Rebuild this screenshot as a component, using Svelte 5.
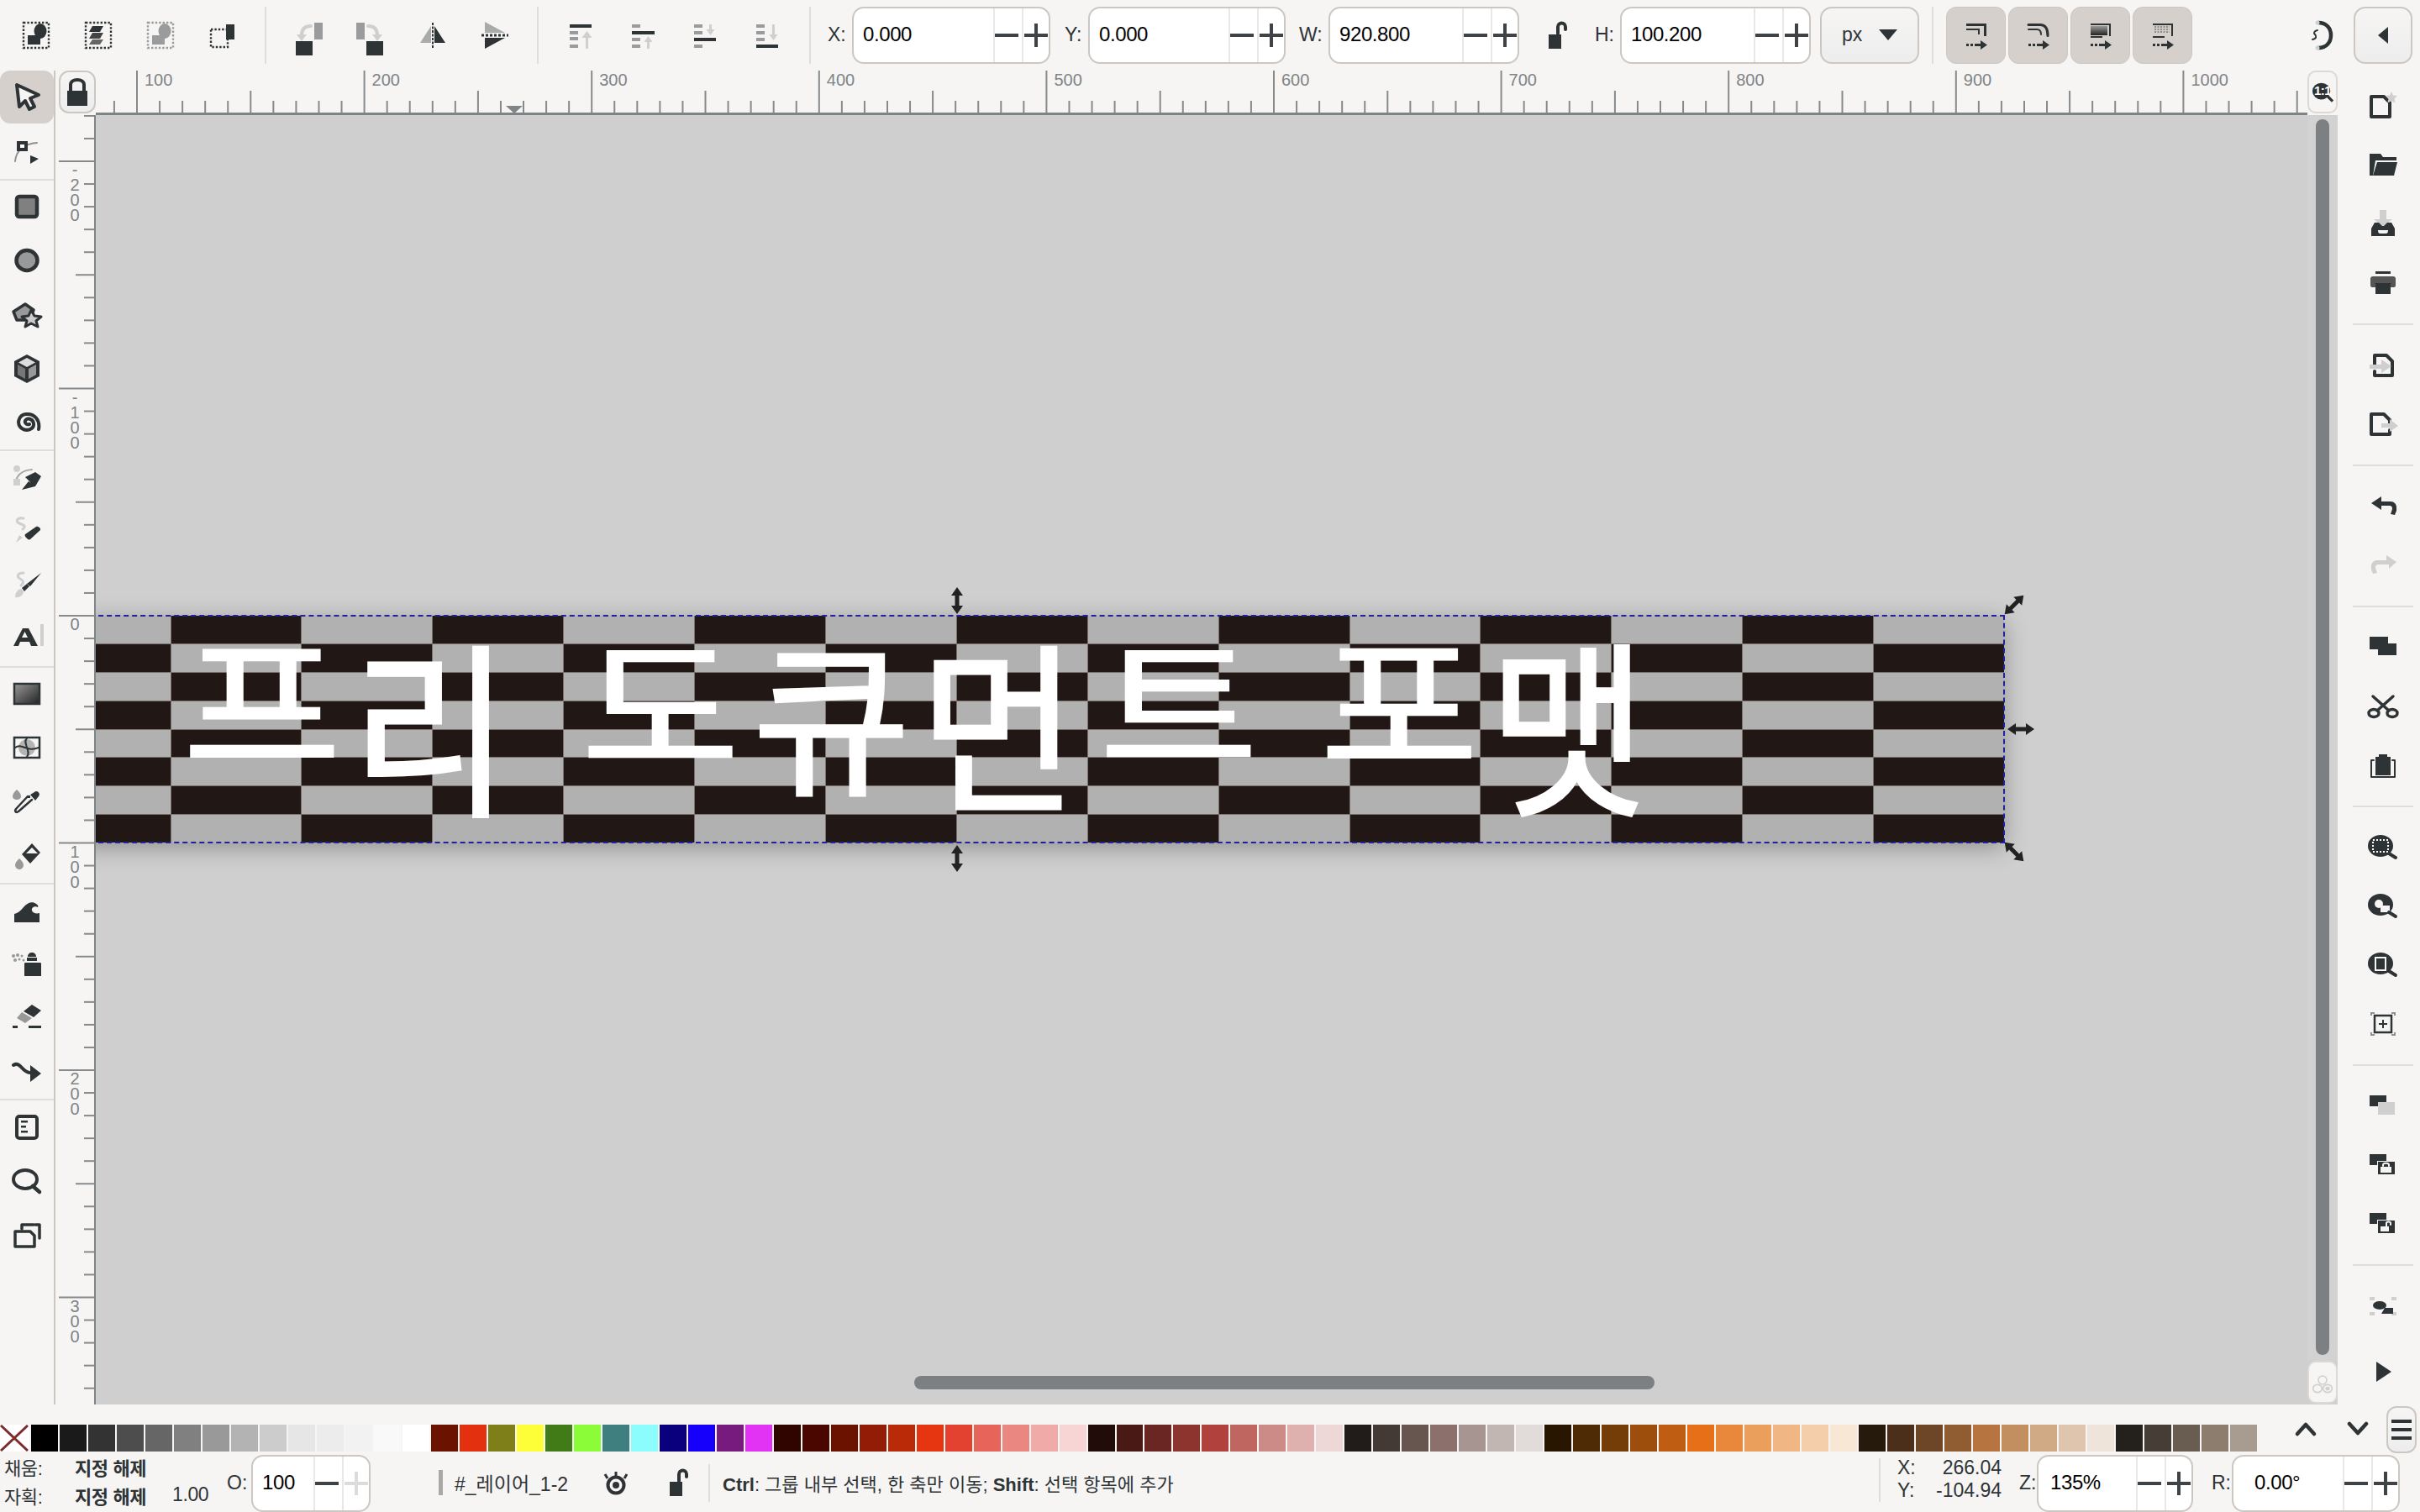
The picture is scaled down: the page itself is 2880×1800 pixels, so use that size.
<script>
  const D = "#2e3436";
  const M = "#999b9c";
  const L = "#cfcfcf";

  const dash = (x, y, w, h, c = D) =>
    `<rect x="${x}" y="${y}" width="${w}" height="${h}" fill="none" stroke="${c}" stroke-width="2.4" stroke-dasharray="2.4 2"/>`;
  const r = (x, y, w, h, c = D) => `<rect x="${x}" y="${y}" width="${w}" height="${h}" fill="${c}"/>`;
  const p = (d, c = D) => `<path d="${d}" fill="${c}"/>`;
  const s = (d, c = D, w = 4) => `<path d="${d}" fill="none" stroke="${c}" stroke-width="${w}" stroke-linecap="round" stroke-linejoin="round"/>`;

  const icons = {
    selAll: dash(9, 9, 30, 30) + `<ellipse cx="29" cy="19" rx="7.5" ry="9" fill="${D}"/>` + r(14, 24, 15, 11),
    selLayers: dash(9, 9, 30, 30) + p("M17 13h13l-4 7H13z") + p("M17 21h13l-4 7H13z", "#444") + p("M17 29h13l-4 6H13z", "#666"),
    invert: dash(9, 9, 30, 30, M) + `<ellipse cx="29" cy="19" rx="7.5" ry="9" fill="${M}"/>` + r(14, 24, 15, 11, M),
    deselect: dash(10, 17, 20, 21) + r(28, 11, 10, 18),
    rotCcw: r(9, 31, 20, 17) + r(31, 9, 10, 20, M) + s("M27 13c-8 0-11 4-11 11", L, 4) + p("M10 23h12l-6 8z", L),
    rotCw: r(19, 31, 20, 17) + r(7, 9, 10, 20, M) + s("M21 13c8 0 11 4 11 11", L, 4) + p("M26 23h12l-6 8z", L),
    flipH: p("M22 13v20H9z", "#a9abab") + p("M26 13v20h13z") + `<path d="M24 9v30" stroke="${D}" stroke-width="2" stroke-dasharray="3 1.5"/>`,
    flipV: p("M12 8v13h24z", "#a9abab") + p("M12 40V27h24z") + `<path d="M8 24h32" stroke="${D}" stroke-width="3" stroke-dasharray="3 2"/>`,
    alignTop: r(11, 11, 26, 4) + r(11, 19, 10, 4, M) + r(11, 26, 10, 4, M) + r(11, 35, 10, 4, M) + r(30, 24, 3, 16, L) + p("M31.5 19l6 8h-12z", L),
    alignCenter: r(11, 11, 10, 4, M) + r(11, 19, 27, 4) + r(11, 27, 10, 4, M) + r(11, 35, 10, 4, M) + r(29, 31, 3, 9, L) + p("M30.5 25l5 7h-10z", L),
    alignBottomIn: r(11, 11, 10, 4, M) + r(11, 19, 10, 4, M) + r(11, 27, 26, 4) + r(11, 35, 10, 4, M) + r(29, 11, 3, 8, L) + p("M30.5 24l5-7h-10z", L),
    alignBottom: r(11, 11, 10, 4, M) + r(11, 19, 10, 4, M) + r(11, 27, 10, 4, M) + r(11, 35, 26, 4) + r(30, 11, 3, 14, L) + p("M31.5 30l5-7h-10z", L),
    snap1: r(12, 10, 24, 3) + r(33, 10, 3, 15) + r(12, 16, 16, 2) + r(26, 16, 2, 7) + r(12, 34, 3, 3) + r(17, 34, 3, 3) + r(22, 34, 8, 3) + p("M29 30l8 5.5-8 5.5z"),
    snap2: s("M12 11.5h14c7 0 9 6 9 13", D, 3) + s("M12 17h10c3 0 5 2 5 6", D, 2) + r(12, 34, 3, 3) + r(17, 34, 3, 3) + r(22, 34, 8, 3) + p("M29 30l8 5.5-8 5.5z"),
    snap3: r(12, 10, 24, 2) + r(34, 10, 2, 15) + `<rect x="12" y="13" width="20" height="11" fill="url(#gr)"/>` + r(12, 25, 14, 2) + r(12, 34, 3, 3) + r(17, 34, 3, 3) + r(22, 34, 8, 3) + p("M29 30l8 5.5-8 5.5z"),
    snap4: r(12, 10, 24, 2) + r(34, 10, 2, 15) + `<path d="M14 14h18M14 17h18M14 20h18" stroke="#777" stroke-width="1.5" stroke-dasharray="2 1.5"/>` + r(12, 25, 14, 2) + r(12, 34, 3, 3) + r(17, 34, 3, 3) + r(22, 34, 8, 3) + p("M29 30l8 5.5-8 5.5z"),
    undoSnap: s("M21 9c10 0 15 7 15 15s-5 15-15 15", D, 4.5) + `<circle cx="20" cy="9" r="2.5" fill="${L}"/><circle cx="20" cy="39" r="2.5" fill="${L}"/>` + s("M20 18c-4 1-5 3-3 5s2 5-3 6", D, 2),
    arrowLeft: p("M30 14v20l-12-10z"),
    lockOpen: r(13, 23, 15, 17) + s("M24 22v-8c0-6 9-6 9 0v3", D, 4),
    lockClosed: r(12, 22, 24, 18) + s("M16 22v-7c0-8 16-8 16 0v7", D, 4),
    oneToOne: `<ellipse cx="22" cy="22" rx="15" ry="14" fill="#2e3436"/><path d="M32 30l9 9" stroke="${D}" stroke-width="4.5"/>`,
    colorMode: `<g fill="none" stroke="#cfcfcf" stroke-width="2.5"><circle cx="24" cy="15" r="7.5"/><ellipse cx="15" cy="30" rx="8" ry="7"/><ellipse cx="33" cy="30" rx="8" ry="7"/></g><ellipse cx="33" cy="30" rx="4" ry="3.5" fill="#cfcfcf"/>`,

    select: `<path d="M12 9L38 21L28 25L33 35L27 38L22 28L15 35Z" fill="#f6f5f4" stroke="${D}" stroke-width="4" stroke-linejoin="round"/>`,
    node: s("M10 35c1-12 10-21 26-22", "#8d8f90", 2) + r(12, 11, 13, 12) + r(16, 15, 5, 4, "#fff") + p("M28 28l10 4-10 6z"),
    rect: `<rect x="12" y="12" width="24" height="24" rx="3" fill="#808080" stroke="${D}" stroke-width="4.5"/>`,
    ellipse: `<ellipse cx="24" cy="24" rx="12.5" ry="12" fill="#999" stroke="${D}" stroke-width="4.5"/>`,
    star: `<path d="M8 20L22 11L32 18L28 30L12 30Z" fill="#999" stroke="${D}" stroke-width="3.5" stroke-linejoin="round"/><path d="M29 18l4 7 8 1-6 5 2 7-8-4-7 4 2-7-6-5 8-1z" fill="#ccc" stroke="${D}" stroke-width="3" stroke-linejoin="round"/>`,
    box: p("M24 7l15 8v18l-15 8-15-8V15z") + p("M24 11l10 5.5-10 5.5-10-5.5z", "#ddd") + p("M13 19l9 5v12l-9-5z", "#777") + p("M35 19l-9 5v12l9-5z", "#999"),
    spiral: s("M27 26c-3 1-6-1-5-4 2-4 9-3 10 3 1 7-8 10-14 6-7-5-4-16 5-17 10-1 17 7 15 18", D, 4),
    pen: s("M10 33c1-11 8-17 20-18", "#a9abab", 2) + `<circle cx="12" cy="14" r="4" fill="${L}"/>` + r(8, 26, 8, 8, L) + p("M22 24l12-6 7 5-7 12-16 4 8-10 3 2-3-3z"),
    pencil: s("M20 9c-8-1-10 4-5 6s9 3 4 7", L, 3) + p("M11 38l4-9 4 3z", L) + p("M22 28l13-9c2-1 6 2 5 4L28 34c-2 2-8-4-6-6z"),
    callig: s("M20 9c-8 0-8 5-4 7s5 5 1 8", L, 3) + p("M10 38c0-7 5-10 7-10l3 3c0 4-4 8-10 7z", L) + p("M18 27l6-5 3 3-6 6z") + p("M24 22L41 9 28 25z"),
    text: p("M8 32L19 11h7l11 21h-8l-2-5H16l-2 5zM18 22h7l-3.5-7z") + r(40, 6, 4, 26, L),
    gradient: `<rect x="9" y="12" width="30" height="24" fill="url(#gr2)" stroke="${D}" stroke-width="2.5"/>`,
    mesh: `<rect x="9" y="12" width="30" height="24" fill="#f6f5f4" stroke="${D}" stroke-width="2.5"/><circle cx="24" cy="24" r="10" fill="#999" opacity=".7"/>` + s("M10 24c8-6 14 6 28 0M24 13c-6 5 6 16 0 22", D, 2),
    dropper: `<path d="M12 10c3 3 5 5 5 8 0 3-3 4-5 4s-5-1-5-4c0-3 2-5 5-8z" fill="#999"/>` + s("M30 22L14 36c-3 2-5 0-3-3l14-15", D, 2.5) + p("M28 16l5-3c3-3 8 2 5 5l-4 5z") + r(25, 17, 3, 3),
    bucket: p("M30 9l10 11-12 13-10-11z") + p("M30 14l-7 7h14z", "#f6f5f4") + `<path d="M15 27c3 3 5 5 5 8s-3 5-5 5-5-2-5-5 2-5 5-8z" fill="#999"/>`,
    tweak: p("M9 38v-10c4-1 8-4 11-8 5-6 11-7 15-4 2 1 3 3 2 4-3-2-8 0-7 4 1 3 5 4 9 3v11z"),
    spray: p("M30 10c3 0 5 2 5 5h-10c0-3 2-5 5-5z") + r(24, 16, 12, 4) + p("M22 22h18c1 0 1 1 1 2v14H21V24c0-1 0-2 1-2z") + `<g fill="#999"><circle cx="8" cy="14" r="2"/><circle cx="13" cy="13" r="2"/><circle cx="18" cy="14" r="1.5"/><circle cx="10" cy="19" r="2"/><circle cx="15" cy="18" r="1.5"/><circle cx="20" cy="19" r="1.5"/></g>`,
    eraser: p("M30 8l11 7-9 8-12-7z") + p("M18 17l12 7-8 6-10-6z", "#999") + r(7, 33, 6, 3) + r(26, 33, 15, 3),
    connector: s("M8 16c8-5 10 8 19 9", D, 4) + p("M28 16l13 10-13 10z"),
    xml: `<rect x="12" y="12" width="24" height="26" rx="3" fill="none" stroke="${D}" stroke-width="4"/>` + r(17, 17, 8, 2.5) + r(17, 23, 6, 2.5) + r(17, 29, 8, 2.5),
    zoom: `<ellipse cx="22" cy="22" rx="14" ry="11" fill="none" stroke="${D}" stroke-width="4"/>` + s("M31 30l8 7", D, 4.5),
    pages: s("M10 20h18l5 5v13H10z", D, 3.5) + s("M18 17v-5h14", D, 3.5) + s("M34 12h5v16", D, 3.5),

    newDoc: s("M10 12h15l7 7v17H10z", D, 4) + p("M34 6l2 4.5 5 .5-3.5 3.5 1 5-4.5-2.5-4.5 2.5 1-5-3.5-3.5 5-.5z", L),
    open: p("M8 10h13l3 4h16v4H15l-3 18H8z") + p("M17 20h24l-4 16H12z"),
    save: r(20, 7, 8, 14, L) + p("M13 18h22l-11 9z", L) + p("M10 29l4-7h5l4 4h2l4-4h5l4 7v9H10zM18 31c0 3 1 4 3 4h6c2 0 3-1 3-4z"),
    print: r(15, 10, 18, 3) + `<path d="M9 19c0-2 1-3 3-3h24c2 0 3 1 3 3v8c0 1-1 2-2 2H11c-1 0-2-1-2-2z" fill="#555"/>` + r(15, 24, 18, 13),
    importDoc: s("M14 26v-14h14l7 7v17H14v-5", D, 4) + r(8, 23, 16, 5, L) + p("M22 17l12 8-12 8z", L),
    exportDoc: s("M10 12h15l7 7v5M32 31v5H10V12", D, 4) + r(22, 23, 16, 5, L) + p("M32 18l10 8-10 7z", L),
    undo: p("M10 20l12-8v6h11c4 0 7 3 7 7v4l-2 5-5-1 2-6c0-3-1-4-3-4H22v5z"),
    redo: p("M40 20l-12-8v6H17c-4 0-7 3-7 7v4l2 5 5-1-2-6c0-3 1-4 3-4h13v5z", L),
    dup: r(8, 11, 22, 15) + r(18, 19, 22, 14),
    cut: `<ellipse cx="13" cy="32" rx="6" ry="4.5" fill="none" stroke="${D}" stroke-width="3.5"/><ellipse cx="35" cy="32" rx="6" ry="4.5" fill="none" stroke="${D}" stroke-width="3.5"/>` + s("M17 29L36 12M31 29L12 12", D, 3.5),
    paste: s("M13 18H10v20h28V18h-3", D, 2) + r(15, 14, 18, 22) + r(19, 11, 10, 4),
    zoomSel: `<ellipse cx="21" cy="22" rx="15" ry="13" fill="${D}"/><rect x="12" y="15" width="18" height="14" fill="none" stroke="#fff" stroke-width="2" stroke-dasharray="2 2"/>` + s("M31 31l8 5", D, 4),
    zoomDraw: `<ellipse cx="21" cy="22" rx="15" ry="13" fill="${D}"/><circle cx="19" cy="21" r="5" fill="#f6f5f4"/>` + r(21, 23, 11, 8, "#f6f5f4") + s("M31 31l8 5", D, 4),
    zoomPage: `<ellipse cx="21" cy="22" rx="15" ry="13" fill="${D}"/>` + r(14, 14, 14, 17, "#f6f5f4") + r(16, 16, 10, 13) + s("M31 31l8 5", D, 4),
    zoomCenter: `<path d="M10 14v-3h4M34 11h4v3M38 34v3h-4M14 37h-4v-3" fill="none" stroke="#8d8f90" stroke-width="2"/><rect x="14" y="14" width="20" height="20" fill="none" stroke="${D}" stroke-width="2.5"/>` + r(19, 23, 10, 2) + r(23, 19, 2, 10),
    clone1: r(8, 11, 20, 13) + r(18, 19, 20, 15, L),
    cloneLock: r(8, 11, 20, 13) + r(17, 19, 22, 17, "#f6f5f4") + r(18, 20, 20, 15) + r(21, 26, 13, 7, "#f6f5f4") + s("M24 25v-1c0-3 7-3 7 0v1", "#f6f5f4", 2),
    cloneUnlock: r(8, 11, 20, 13) + r(17, 19, 22, 17, "#f6f5f4") + r(18, 20, 20, 15) + r(21, 27, 10, 6, "#f6f5f4") + s("M28 27v-4c0-2 5-2 5 0v2", "#f6f5f4", 2),
    group: r(8, 13, 6, 4, L) + r(34, 13, 6, 4, L) + r(8, 31, 6, 4, L) + r(34, 31, 6, 4, L) + `<ellipse cx="20" cy="23" rx="8" ry="5" fill="${D}"/>` + p("M26 26h10v7H22z"),
    expand: p("M16 12l18 12-18 12z"),
    up: s("M14 28l10-11 10 11", D, 4.5),
    down: s("M14 18l10 11 10-11", D, 4.5),
    eye: `<circle cx="24" cy="27" r="9.5" fill="none" stroke="${D}" stroke-width="4"/><circle cx="24" cy="27" r="4" fill="${D}"/><path d="M14 19l-3-5M34 19l3-5M24 16v-5" stroke="${D}" stroke-width="3"/>`,
  };

  const topA = ["selAll", "selLayers", "invert", "deselect"];
  const topB = ["rotCcw", "rotCw", "flipH", "flipV"];
  const topC = ["alignTop", "alignCenter", "alignBottomIn", "alignBottom"];
  const snapBtns = ["snap1", "snap2", "snap3", "snap4"];

  const tools = [
    ["select", "node"],
    ["rect", "ellipse", "star", "box", "spiral"],
    ["pen", "pencil", "callig", "text"],
    ["gradient", "mesh", "dropper", "bucket"],
    ["tweak", "spray", "eraser", "connector"],
    ["xml", "zoom", "pages"],
  ];
  const commands = [
    ["newDoc", "open", "save", "print"],
    ["importDoc", "exportDoc"],
    ["undo", "redo"],
    ["dup", "cut", "paste"],
    ["zoomSel", "zoomDraw", "zoomPage", "zoomCenter"],
    ["clone1", "cloneLock", "cloneUnlock"],
    ["group", "expand"],
  ];

  const swatches = (
    "000000 1a1a1a 333333 4d4d4d 666666 808080 999999 b3b3b3 cccccc e6e6e6 ececec f2f2f2 f9f9f9 ffffff " +
    "6c1200 e33110 7f7f19 fdfd38 417b17 8bfd38 407f80 8bfdfd 0a007d 1600fb 781b7e e233f5 " +
    "300500 4a0700 6c1200 921c05 ba2a09 e53511 e44230 e6645a ea8781 f0aaa8 f7d5d4 " +
    "210c09 491916 692622 8d342f b1413c bf6660 cc8b87 deb0ae edd8d7 " +
    "211c1a 433935 67554f 8b706c a69590 c2b6b2 e1dcda " +
    "281601 4e2a05 743d08 9e4e0c bf5d12 e66f17 e9883a eb9f5d f0b785 f4cdaa f9e7d6 " +
    "261a0d 4b2f1a 6c4626 905d33 b57440 c28f61 d0aa85 e0c5ae efe4da " +
    "24201c 453d36 695d52 8d7d6f a89c90"
  ).split(" ");

  // 눈금: 100 단위마다 긴 눈금과 숫자
  const hTicks = [];
  for (let v = 90; v <= 1050; v += 10) {
    hTicks.push({ v, x: 49 + 2.706 * (v - 100), top: v % 100 === 0 ? 0 : v % 50 === 0 ? 24 : 36 });
  }
  const vTicks = [];
  for (let v = -220; v <= 340; v += 10) {
    vTicks.push({ v, y: 596 + 2.705 * v, left: v % 100 === 0 ? 4 : v % 50 === 0 ? 24 : 34 });
  }
  const cells = Array.from({ length: 120 }, (_, i) => (i % 15) % 2 !== Math.floor(i / 15) % 2);

  // 글자별 세로 비율과 위치 (원본 글꼴의 자형이 글자마다 달라서)
  const title = [
    { ch: "프", sy: 0.88, dy: -20, dx: 0 },
    { ch: "리", sy: 1.08, dy: 9, dx: -4 },
    { ch: " ", sy: 1, dy: 0, dx: 0 },
    { ch: "도", sy: 0.85, dy: -18, dx: 3 },
    { ch: "큐", sy: 0.96, dy: -3, dx: 2 },
    { ch: "먼", sy: 1.06, dy: 7, dx: -4 },
    { ch: "트", sy: 0.85, dy: -19, dx: 6 },
    { ch: " ", sy: 1, dy: 0, dx: 0 },
    { ch: "포", sy: 0.88, dy: -20, dx: 2 },
    { ch: "맷", sy: 1.09, dy: 8, dx: -2 },
  ];
</script>

{#snippet icon(name)}
  <svg class="ico" viewBox="0 0 48 48" width="48" height="48">{@html icons[name]}</svg>
{/snippet}

{#snippet spin(value, cls, off = false)}
  <div class="field {cls}">
    <span class="val">{value}</span>
    <span class="step"><i class="minus"></i></span>
    <span class="step" class:off><i class="minus"></i><i class="plus"></i></span>
  </div>
{/snippet}

{#snippet handle(cls)}
  <svg class="handle {cls}" viewBox="0 0 16 32" width="16" height="32"><path d="M8 0L15 10H10.5V22H15L8 32L1 22H5.5V10H1Z" fill="#222"/></svg>
{/snippet}

<svg class="defs" width="0" height="0">
  <defs>
    <linearGradient id="gr" x1="0" x2="0" y1="0" y2="1"><stop offset="0" stop-color="#999"/><stop offset="1" stop-color="#222"/></linearGradient>
    <linearGradient id="gr2" x1="0" x2="1" y1="0" y2="1"><stop offset="0" stop-color="#999"/><stop offset="1" stop-color="#222"/></linearGradient>
  </defs>
</svg>

<div class="app">
  <header class="top">
    <div class="cells">{#each topA as n}<span class="cell">{@render icon(n)}</span>{/each}</div>
    <span class="sep"></span>
    <div class="cells">{#each topB as n}<span class="cell">{@render icon(n)}</span>{/each}</div>
    <span class="sep"></span>
    <div class="cells">{#each topC as n}<span class="cell">{@render icon(n)}</span>{/each}</div>
    <span class="sep last"></span>
    <span class="lbl lx">X:</span>
    {@render spin("0.000", "wx")}
    <span class="lbl ly">Y:</span>
    {@render spin("0.000", "wy")}
    <span class="lbl lw">W:</span>
    {@render spin("920.800", "ww")}
    <span class="lockcell">{@render icon("lockOpen")}</span>
    <span class="lbl lh">H:</span>
    {@render spin("100.200", "ww")}
    <button class="combo">px<i class="caret"></i></button>
    <span class="sep unit"></span>
    <div class="snaps">
      {#each snapBtns as n}<button class="snap">{@render icon(n)}</button>{/each}
    </div>
    <span class="undosnap">{@render icon("undoSnap")}</span>
    <button class="toggle">{@render icon("arrowLeft")}</button>
  </header>

  <div class="middle">
    <aside class="tools">
      {#each tools as group, g}
        {#if g > 0}<hr class="div" />{/if}
        {#each group as n}
          <button class="tool" class:active={n === "select"}>{@render icon(n)}</button>
        {/each}
      {/each}
    </aside>

    <div class="work">
      <div class="corner"><button class="lockbtn">{@render icon("lockClosed")}</button></div>
      <div class="hruler-row">
        <svg class="hruler" height="53" width="2632">
          {#each hTicks as t}
            <line x1={t.x} x2={t.x} y1={t.top} y2="50" />
            {#if t.v % 100 === 0}<text x={t.x + 9} y="18">{t.v}</text>{/if}
          {/each}
          <path class="mark" d="M488 42h20l-10 9z" />
          <rect class="base" y="50" width="2632" height="3" />
        </svg>
        <button class="onetoone">{@render icon("oneToOne")}<span>1:1</span></button>
      </div>
      <svg class="vruler" width="48" height="1535">
        {#each vTicks as t}
          <line x1={t.left} x2="46" y1={t.y} y2={t.y} />
          {#if t.v % 100 === 0}
            {#each String(t.v).split("") as ch, i}
              <text x="23" y={t.y + 17 + i * 18} text-anchor="middle">{ch}</text>
            {/each}
          {/if}
        {/each}
        <rect class="base" x="46" width="2" height="1535" />
      </svg>

      <div class="canvas">
        <div class="page">
          <div class="checks">
            {#each cells as dark}<span class:dark></span>{/each}
          </div>
          <div class="title">{#each title as g}<span style="transform:translate({g.dx}px,{g.dy}px) scaleY({g.sy})">{g.ch}</span>{/each}</div>
          <div class="sel"></div>
          {@render handle("h-top")}
          {@render handle("h-bottom")}
          {@render handle("h-right")}
          {@render handle("h-tr")}
          {@render handle("h-br")}
        </div>
        <div class="vtrack"><i></i></div>
        <div class="hbar"></div>
        <button class="cmode">{@render icon("colorMode")}</button>
      </div>
    </div>

    <aside class="cmds">
      {#each commands as group, g}
        {#if g > 0}<hr class="div" />{/if}
        {#each group as n}
          <button class="cmd">{@render icon(n)}</button>
        {/each}
      {/each}
    </aside>
  </div>

  <div class="palette-row">
    <svg class="none" width="35" height="32" viewBox="0 0 35 32">
      <rect width="35" height="32" fill="#fff" />
      <path d="M1 1L33 31M33 1L1 31" stroke="#7d2c2c" stroke-width="3" />
    </svg>
    <div class="swatches">
      {#each swatches as c}<span style="background:#{c}"></span>{/each}
    </div>
    <span class="pal-up">{@render icon("up")}</span>
    <span class="pal-down">{@render icon("down")}</span>
    <button class="menu"><i></i><i></i><i></i></button>
  </div>

  <footer class="status">
    <div class="paint">
      <span>채움:</span><b>지정 해제</b><em></em>
      <span>자획:</span><b>지정 해제</b><em>1.00</em>
    </div>
    <span class="lbl lo">O:</span>
    {@render spin("100", "wo", true)}
    <span class="layerbar"></span>
    <span class="layer">#_레이어_1-2</span>
    <span class="st-eye">{@render icon("eye")}</span>
    <span class="st-lock">{@render icon("lockOpen")}</span>
    <span class="sep st"></span>
    <span class="msg"><b>Ctrl</b>: 그룹 내부 선택, 한 축만 이동; <b>Shift</b>: 선택 항목에 추가</span>
    <span class="sep co"></span>
    <div class="coords">
      <span>X:</span><span class="num">266.04</span>
      <span>Y:</span><span class="num">-104.94</span>
    </div>
    <span class="lbl lz">Z:</span>
    {@render spin("135%", "wz")}
    <span class="lbl lr">R:</span>
    {@render spin("0.00°", "wr")}
  </footer>
</div>

<style>
  :global(body) {
    margin: 0;
    background: #f6f5f4;
  }
  .defs {
    position: absolute;
  }
  .app {
    width: 2880px;
    height: 1800px;
    overflow: hidden;
    background: #f6f5f4;
    color: #2e3436;
    font-family: "Liberation Sans", "Noto Sans CJK KR", sans-serif;
    font-size: 22px;
  }
  button {
    padding: 0;
    border: none;
    background: none;
    font: inherit;
    color: inherit;
  }
  .ico {
    display: block;
    flex: none;
  }

  .top {
    display: flex;
    align-items: center;
    height: 83px;
    margin-bottom: 1px;
    padding: 0 0 0 6px;
    box-sizing: border-box;
  }
  .cells {
    display: flex;
  }
  .cell {
    display: flex;
    justify-content: center;
    width: 74px;
  }
  .sep {
    flex: none;
    width: 2px;
    height: 68px;
    margin: 0 13px;
    background: #e0dedb;
  }
  .sep.last {
    margin-right: 20px;
  }
  .sep.unit {
    margin: 0 15px;
  }
  .lbl {
    flex: none;
    font-size: 23px;
  }
  .lx {
    width: 29px;
  }
  .ly {
    width: 28px;
    margin-left: 17px;
  }
  .lw {
    width: 35px;
    margin-left: 16px;
  }
  .lh {
    width: 30px;
    margin-left: 20px;
  }
  .lockcell {
    margin-left: 22px;
  }
  .field {
    flex: none;
    display: flex;
    align-items: stretch;
    height: 68px;
    box-sizing: border-box;
    border: 2px solid #cdc7c2;
    border-radius: 14px;
    background: #fff;
    color: #000;
    font-size: 24px;
    letter-spacing: -0.4px;
  }
  .wx {
    width: 236px;
  }
  .wy {
    width: 235px;
  }
  .ww {
    width: 227px;
  }
  .wo {
    width: 142px;
  }
  .wz {
    width: 186px;
  }
  .wr {
    width: 200px;
  }
  .val {
    flex: 1;
    min-width: 0;
    align-self: center;
    padding: 0 0 2px 11px;
  }
  .wz .val {
    padding-left: 14px;
  }
  .wr .val {
    padding-left: 25px;
  }
  .step {
    position: relative;
    flex: none;
    width: 32px;
    border-left: 2px solid #eae8e6;
  }
  .step:last-child {
    width: 30px;
  }
  .minus,
  .plus {
    position: absolute;
    left: 0;
    top: 30px;
    width: 28px;
    height: 4px;
    background: #3d4346;
  }
  .step:last-child .minus {
    left: 1px;
  }
  .step:last-child .plus {
    left: 13px;
    top: 18px;
    width: 4px;
    height: 28px;
  }
  .off .minus,
  .step.off:last-child .plus {
    background: #dcdcdc;
  }
  .combo {
    display: flex;
    align-items: center;
    justify-content: space-between;
    width: 118px;
    height: 68px;
    margin-left: 11px;
    padding: 0 24px;
    box-sizing: border-box;
    border: 2px solid #cdc7c2;
    border-radius: 14px;
    background: linear-gradient(#f6f5f4, #ededed);
    font-size: 23px;
  }
  .caret {
    width: 0;
    height: 0;
    border: 11px solid transparent;
    border-top: 13px solid #2e3436;
    border-bottom: 0;
  }
  .snaps {
    display: flex;
    gap: 3px;
  }
  .snap {
    display: flex;
    align-items: center;
    justify-content: center;
    width: 71px;
    height: 68px;
    border-radius: 12px;
    background: #d5d0cc;
    border: 1px solid #cdc7c2;
    box-sizing: border-box;
  }
  .undosnap {
    margin-left: 129px;
  }
  .toggle {
    display: flex;
    align-items: center;
    justify-content: center;
    width: 70px;
    height: 68px;
    margin-left: 15px;
    box-sizing: border-box;
    border: 2px solid #cdc7c2;
    border-radius: 14px;
    background: linear-gradient(#f6f5f4, #ededed);
  }

  .middle {
    display: flex;
    height: 1588px;
  }
  .tools {
    flex: none;
    width: 64px;
    padding-top: 1px;
    box-sizing: content-box;
    display: flex;
    flex-direction: column;
    border-right: 2px solid #cdc7c2;
  }
  .tool {
    display: flex;
    align-items: center;
    justify-content: center;
    flex: none;
    width: 64px;
    height: 64.2px;
  }
  .tool.active {
    height: 63px;
    margin: -1px 0 2px;
    border-radius: 12px;
    background: #d5d0cc;
  }
  .div {
    width: 100%;
    height: 2px;
    margin: 0 0 -1px;
    border: 0;
    flex: none;
    background: #e0dedb;
  }

  .work {
    flex: 1;
    display: grid;
    grid-template-columns: 48px 1fr;
    grid-template-rows: 53px 1fr;
    min-width: 0;
  }
  .corner {
    padding-left: 4px;
  }
  .lockbtn {
    display: flex;
    align-items: center;
    justify-content: center;
    width: 44px;
    height: 51px;
    box-sizing: border-box;
    border: 2px solid #cdc7c2;
    border-radius: 12px;
    background: linear-gradient(#f6f5f4, #ededed);
  }
  .hruler-row {
    display: flex;
  }
  .hruler,
  .vruler {
    display: block;
    font-size: 20px;
    fill: #808486;
    stroke: none;
  }
  .hruler line,
  .vruler line {
    stroke: #868a8c;
    stroke-width: 2;
  }
  .base {
    fill: #7f8486;
  }
  .mark {
    fill: #7f8486;
  }
  .onetoone {
    position: relative;
    flex: none;
    width: 36px;
    height: 51px;
    box-sizing: border-box;
    border: 2px solid #dcd8d4;
    border-radius: 10px;
    overflow: hidden;
    display: flex;
    align-items: center;
    justify-content: center;
  }
  .onetoone .ico {
    width: 34px;
    height: 34px;
  }
  .onetoone span {
    position: absolute;
    left: 6px;
    top: 13px;
    color: #fff;
    font-size: 15px;
    font-weight: bold;
    letter-spacing: -0.5px;
  }
  .canvas {
    position: relative;
    overflow: hidden;
    background: #cfcfcf;
  }
  .page {
    position: absolute;
    left: -66.4px;
    top: 596px;
    width: 2337.4px;
    height: 270px;
    box-shadow: 0 6px 26px rgba(0, 0, 0, 0.3);
  }
  .checks {
    display: grid;
    grid-template-columns: repeat(15, 1fr);
    grid-template-rows: repeat(8, 1fr);
    gap: 1px;
    height: 100%;
    background: #7b716c;
  }
  .checks span {
    background: #b1b1b1;
  }
  .checks span.dark {
    background: #211715;
  }
  .title {
    position: absolute;
    left: 170px;
    top: -24px;
    color: #fff;
    font-family: "Noto Sans CJK KR", sans-serif;
    font-size: 205px;
    line-height: 280px;
    letter-spacing: 16px;
    white-space: pre;
    -webkit-text-stroke: 3px #fff;
  }
  .title span {
    display: inline-block;
  }
  .sel {
    position: absolute;
    inset: -1px;
    border: 2px dashed #2020a0;
  }
  .handle {
    position: absolute;
  }
  .h-top {
    left: 1083px;
    top: -34px;
  }
  .h-bottom {
    left: 1083px;
    top: 273px;
  }
  .h-right {
    left: 2349px;
    top: 119px;
    transform: rotate(90deg);
  }
  .h-tr {
    left: 2341px;
    top: -29px;
    transform: rotate(45deg);
  }
  .h-br {
    left: 2341px;
    top: 265px;
    transform: rotate(-45deg);
  }
  .vtrack {
    position: absolute;
    right: 0;
    top: 0;
    width: 36px;
    height: 1483px;
    background: #d2d2d2;
  }
  .vtrack i {
    position: absolute;
    left: 10px;
    top: 5px;
    width: 16px;
    height: 1471px;
    border-radius: 8px;
    background: #7c8082;
  }
  .hbar {
    position: absolute;
    left: 974px;
    bottom: 18px;
    width: 881px;
    height: 16px;
    border-radius: 8px;
    background: #7c8082;
  }
  .cmode {
    position: absolute;
    right: 0;
    bottom: 1px;
    width: 36px;
    height: 51px;
    box-sizing: border-box;
    border: 2px solid #dcd8d4;
    border-radius: 10px;
    background: #f6f5f4;
    overflow: hidden;
  }
  .cmode .ico {
    width: 32px;
    height: 32px;
    margin: 7px 0 0;
  }
  .cmds {
    flex: none;
    width: 98px;
    display: flex;
    flex-direction: column;
    align-items: center;
    padding: 8px 0 0 10px;
    box-sizing: border-box;
  }
  .cmd {
    display: flex;
    align-items: center;
    justify-content: center;
    height: 70px;
    flex: none;
  }
  .cmd:last-child {
    margin-top: 8px;
  }
  .cmds .div {
    width: 72px;
    margin: 13px 8px 13px 0;
    align-self: flex-end;
  }

  .palette-row {
    display: flex;
    height: 58px;
    align-items: flex-start;
    position: relative;
  }
  .none {
    flex: none;
    margin-top: 24px;
    margin-right: 2px;
  }
  .swatches {
    flex: none;
    width: 2649px;
    height: 32px;
    margin-top: 24px;
    display: grid;
    grid-template-columns: repeat(78, 1fr);
    gap: 2px;
  }
  .pal-up {
    margin: 7px 0 0 34px;
  }
  .pal-down {
    margin: 5px 0 0 14px;
  }
  .menu {
    width: 36px;
    height: 56px;
    margin: 2px 0 0 10px;
    padding: 14px 4px 0;
    box-sizing: border-box;
    border: 2px solid #cdc7c2;
    border-radius: 12px;
    background: linear-gradient(#f6f5f4, #ededed);
    display: flex;
    flex-direction: column;
    gap: 6px;
  }
  .menu i {
    display: block;
    height: 4px;
    background: #2e3436;
  }

  .status {
    display: flex;
    align-items: center;
    height: 70px;
    font-size: 22px;
  }
  .paint {
    flex: none;
    width: 270px;
    margin-top: -5px;
    display: grid;
    grid-template-columns: 84px 116px auto;
    grid-auto-rows: 34px;
    align-items: center;
    padding-left: 5px;
    box-sizing: border-box;
    font-size: 22px;
    letter-spacing: -0.4px;
  }
  .paint em {
    font-style: normal;
    font-size: 23px;
  }
  .paint b {
    white-space: nowrap;
  }
  .lo {
    width: 29px;
  }
  .layerbar {
    flex: none;
    width: 5px;
    height: 30px;
    margin-left: 81px;
    background: #a8a8a8;
  }
  .layer {
    width: 168px;
    margin-left: 14px;
    font-size: 23px;
    white-space: nowrap;
  }
  .st-lock {
    margin-left: 27px;
  }
  .sep.st {
    height: 45px;
    margin: 0 15px 0 11px;
  }
  .msg {
    width: 1376px;
    white-space: nowrap;
  }
  .sep.co {
    height: 52px;
    margin: 0 0 6px;
  }
  .coords {
    flex: none;
    width: 124px;
    margin-left: 20px;
    display: grid;
    grid-template-columns: 30px 1fr;
    grid-auto-rows: 27px;
    font-size: 23px;
    margin-top: -8px;
    white-space: nowrap;
  }
  .num {
    text-align: right;
  }
  .lz {
    width: 21px;
    margin-left: 21px;
  }
  .wz,
  .wr,
  .wo {
    align-self: flex-end;
  }
  .lr {
    width: 24px;
    margin-left: 22px;
  }
</style>
